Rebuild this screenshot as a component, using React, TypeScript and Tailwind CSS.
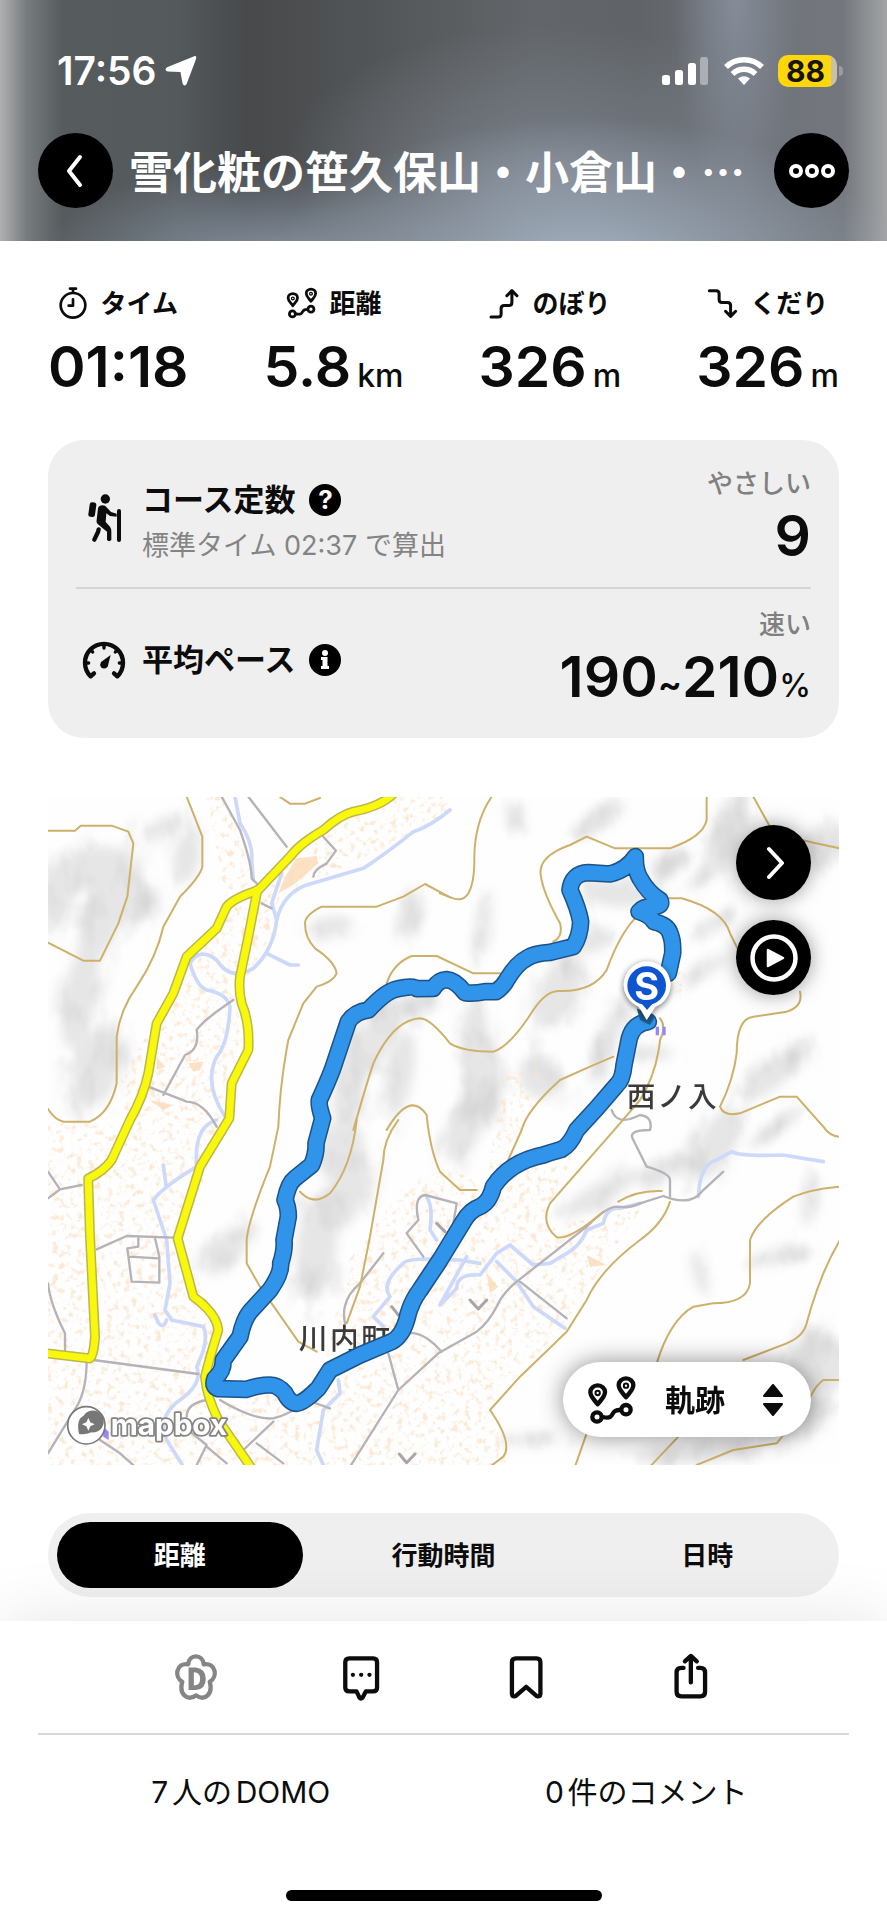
import { useState } from "react";
import type { ReactNode } from "react";

const ROUTE =
  "M1825 695Q1780 700 1768 745L1752 825Q1748 870 1730 885L1670 955L1610 1020Q1590 1065 1565 1078Q1540 1085 1510 1095Q1410 1115 1360 1190Q1350 1235 1320 1250Q1290 1260 1270 1295L1200 1410L1140 1500Q1110 1540 1100 1590Q1085 1640 1055 1655L960 1695L870 1740L835 1795Q790 1840 770 1840Q750 1840 735 1810Q715 1785 690 1785Q655 1785 620 1798L535 1796Q515 1790 525 1765Q550 1745 550 1710L600 1640Q610 1590 630 1565L690 1500Q725 1450 722 1420Q735 1380 732 1350L745 1280Q745 1250 735 1230Q745 1180 765 1165L815 1125Q830 1090 828 1060L848 985Q835 945 838 930Q870 860 880 830L925 695Q945 665 985 660Q1040 600 1075 596Q1120 585 1130 596L1180 595Q1195 570 1220 569Q1245 570 1275 608Q1300 612 1335 605L1368 605Q1390 590 1400 570Q1430 520 1460 505Q1480 490 1530 487L1600 470Q1620 440 1622 395Q1615 355 1590 300Q1595 250 1645 248L1710 252Q1760 240 1786 200Q1785 240 1800 265Q1825 310 1860 330Q1870 350 1835 350Q1810 350 1797 365Q1830 375 1842 395Q1880 405 1888 425Q1900 450 1898 490L1885 550";

const CONTOURS = [
  "M24 122H105L122 107H215L265 125L280 160L262 320L235 400L180 512H130L24 458",
  "M24 957Q45 990 70 995H150Q210 970 230 880V740Q240 660 290 590Q350 500 370 410L420 320Q480 260 487 230V140L440 20",
  "M720 21L750 41H795L840 24",
  "M1230 322L1155 282L1090 320L1010 350H845Q795 375 795 400Q795 445 825 475Q885 515 890 550Q880 575 830 590L790 640L745 750Q720 880 715 1010L690 1130Q625 1290 620 1350V1420L660 1490L775 1655L830 1685",
  "M1040 580Q1060 520 1115 498H1190L1300 550H1380",
  "M940 1020Q980 880 1000 820Q1060 690 1140 685Q1170 685 1230 760Q1270 785 1360 785Q1410 770 1480 660Q1520 600 1560 603Q1660 605 1700 540Q1740 430 1790 380",
  "M1040 1020Q1110 900 1160 975Q1170 1080 1200 1145L1260 1200H1310",
  "M950 990Q935 1130 870 1210Q820 1250 780 1205",
  "M1075 990Q1030 1050 1030 1110L990 1340L960 1490L920 1600",
  "M1355 20Q1300 100 1303 220Q1300 345 1240 325L1200 310",
  "M2000 20V90Q1990 140 1890 175H1725L1640 140L1590 165Q1490 200 1503 260Q1510 310 1560 400Q1570 440 1540 455",
  "M2140 20L2190 110L2260 145L2400 175",
  "M1880 325H1925Q2050 360 2070 430L2100 490M2280 605Q2290 650 2240 665L2140 680Q2090 685 2090 790Q2080 870 2040 950Q2050 980 2100 970L2220 920H2270L2350 1010Q2370 1040 2400 1040",
  "M1860 685Q1880 710 1860 750Q1850 850 1800 930L1740 1000L1530 1240Q1500 1300 1550 1342Q1590 1350 1690 1265",
  "M1735 1235Q1790 1200 1865 1203M1890 1235Q1870 1300 1800 1350Q1680 1440 1640 1530L1580 1625L1440 1760L1350 1860Q1420 1960 1390 2000L1350 2030",
  "M1720 800L1650 830L1560 870Q1460 960 1445 1020L1400 1120",
  "M2400 1190Q2320 1195 2260 1220Q2150 1290 2130 1350V1480Q2120 1540 2020 1540L1960 1550Q1890 1590 1850 1720M1640 1930L1605 2030",
  "M2400 1350Q2340 1450 2300 1600Q2290 1640 2240 1660L2110 1710M2400 1770H2350Q2320 1790 2300 1850L2210 1960L2080 1980L1970 2025M1915 1940L1830 2030",
];

const WATER = [
  "M1230 60Q1170 110 1120 125Q1040 190 970 235Q850 270 800 285Q730 310 710 390Q700 480 640 535Q570 575 530 510Q480 470 450 520Q470 590 500 600Q560 610 570 650Q565 760 530 800Q490 880 555 980",
  "M585 21L600 100Q640 160 635 210L640 270M725 250L695 340L710 390M680 490L750 525H775",
  "M530 990Q460 1010 470 1130Q370 1190 340 1230L380 1350L390 1480L375 1560L395 1590L490 1610Q510 1650 470 1730Q490 1780 420 1830Q350 1880 380 1950L430 2030",
  "M370 1125L378 1185M345 1575Q365 1630 380 1590",
  "M1160 1220Q1180 1250 1170 1320L1190 1350M1320 1420L1260 1410Q1100 1400 1090 1420Q1020 1480 1050 1520L1000 1580L1030 1610",
  "M1280 1400L1200 1545L1250 1495Q1250 1450 1320 1455L1370 1390L1410 1365L1480 1425L1530 1420L1580 1390Q1620 1370 1640 1320L1690 1300Q1700 1250 1740 1255L1800 1240",
  "M1975 1220Q1980 1120 2030 1110L2075 1085Q2100 1100 2230 1095L2350 1115",
  "M1370 1415L1430 1475L1480 1550L1575 1615",
  "M895 1770L900 1810L850 1860L830 1980L850 2025",
];

const ROADS = [
  "M545 20L600 120Q635 220 635 265L655 285M625 20L740 170M850 140L888 182L860 220Q820 240 820 260",
  "M325 890L440 935Q490 935 530 1010M370 915L435 795Q480 780 470 720Q490 690 580 630M665 340L695 355",
  "M24 1145L60 1198L125 1185M24 1225L60 1198M170 1378L260 1338L400 1343M295 1340V1370L262 1375L275 1475L358 1478V1400L345 1345M268 1400L355 1405",
  "M24 1480Q30 1540 75 1630V1690M160 1710L475 1752M140 1710Q140 1800 110 1850L24 1990M180 1950L240 1990L285 2030",
  "M540 1830Q640 1890 700 1885Q760 1870 800 1830L870 1855M440 1880Q440 1840 500 1830M700 1895L610 1980M450 1925L500 1965L470 2025M500 1970L560 2020M650 1960L730 2020",
  "M930 2030L1075 1800L1195 1690L1310 1625Q1350 1595 1380 1530Q1400 1500 1430 1475L1640 1310Q1700 1250 1730 1250Q1770 1255 1800 1240L1870 1218Q1950 1250 1985 1205L2050 1145",
  "M1075 1800L1045 1690M1205 1685Q1150 1625 1110 1630M1030 1390L960 1480Q900 1530 915 1600M1150 1400L1100 1330L1135 1290Q1120 1220 1155 1215L1250 1240L1240 1300",
  "M1440 1475L1580 1585M1715 960Q1730 1010 1800 975Q1840 980 1830 1020Q1760 1020 1780 1050L1820 1130Q1890 1150 1890 1170V1220",
];

const YELLOW = [
  "M1060 12Q1020 50 940 65Q900 75 850 120Q780 160 750 200L655 300Q580 325 560 350L530 415L440 500L400 610L350 700L325 850Q310 920 270 990L215 1110Q190 1145 145 1165V1180L150 1340L165 1640Q160 1710 145 1705L20 1690",
  "M652 300L625 440L600 560Q595 600 605 640Q630 700 625 780L575 880L568 985L480 1130L413 1345L460 1520Q530 1570 535 1620Q510 1700 495 1760Q500 1820 535 1890L635 2035",
];

const HILLS: [number, number, number, number, number][] = [
  [130, 240, 130, 60, -20], [200, 350, 60, 190, 20], [120, 620, 50, 160, 10], [440, 200, 40, 80, 10],
  [170, 830, 70, 120, 15], [280, 330, 60, 70, 0], [370, 110, 70, 25, -25], [50, 330, 50, 80, 20],
  [870, 410, 70, 30, -10], [1110, 380, 30, 70, 10], [1010, 740, 50, 130, 25], [1100, 650, 90, 30, -20],
  [930, 870, 45, 150, 10], [1080, 850, 40, 130, 10], [900, 1080, 70, 90, 20], [830, 1370, 60, 160, 5],
  [560, 1380, 90, 45, -50], [920, 1200, 60, 130, 20], [1330, 410, 20, 90, 10], [1420, 80, 20, 50, -15],
  [1680, 90, 90, 25, -35], [1730, 310, 110, 40, 5], [1560, 600, 60, 120, 25], [1330, 880, 50, 140, 0],
  [1300, 740, 40, 110, 5], [1500, 860, 60, 70, -30], [1270, 1020, 50, 100, 20], [1660, 450, 60, 35, -20],
  [1890, 220, 70, 28, -25], [1990, 260, 60, 20, -35], [2060, 130, 50, 130, 20], [1990, 540, 80, 20, -30],
  [2020, 400, 70, 20, -30], [2200, 850, 120, 40, -38], [2030, 1060, 55, 120, 30], [2200, 1020, 90, 20, -35],
  [1680, 1210, 130, 32, -30], [1870, 1140, 90, 30, -20], [2310, 1230, 20, 80, 10], [2220, 1400, 80, 22, -10],
  [1980, 1450, 20, 70, -15], [2340, 1720, 90, 90, 0], [1980, 1990, 190, 30, -5], [2260, 1890, 120, 50, -20],
  [1700, 760, 30, 130, 20], [1470, 1950, 90, 15, 0], [1840, 790, 60, 20, 0], [2360, 160, 60, 60, 20],
];

const TOWNS = [
  "M500 20L560 20L640 280L560 320L520 420L350 690L240 860L260 1000L24 1000V2030H630L500 1800L530 1600L420 1340L570 980L620 760L600 560L650 300L850 120L1060 20H1230V80L850 260L720 310L690 490L620 560V330L560 340Z",
  "M520 1840L880 1780L1100 1640L1200 1430L1380 1170L1640 1020L1500 1300L1640 1290L1800 1260L1640 1500L1560 1620L1350 1850L1400 2025H640Z",
  "M860 1700L920 1420L1100 1180L1230 1130L1330 1190L1060 1640Z",
  "M1880 520L1950 560L1920 620L1860 600ZM1400 850L1500 830L1420 1100L1340 1150Z",
];

function TerrainMap() {
  return (
    <svg viewBox="24 21 2373 2004" className="block h-auto w-full" role="img" aria-label="Map of the hiking course">
      <defs>
        <filter id="soft" x="-50%" y="-50%" width="200%" height="200%">
          <feGaussianBlur stdDeviation="16" />
        </filter>
        <filter id="relief" x="0" y="0" width="100%" height="100%">
          <feTurbulence type="fractalNoise" baseFrequency="0.012 0.007" numOctaves="3" seed="8" />
          <feColorMatrix values="0 0 0 0 .5  0 0 0 0 .5  0 0 0 0 .5  1.8 0 0 0 -.8" />
        </filter>
        <filter id="speckle" x="0" y="0" width="100%" height="100%">
          <feTurbulence type="fractalNoise" baseFrequency="0.055" numOctaves="3" seed="4" />
          <feColorMatrix values="0 0 0 0 .97  0 0 0 0 .76  0 0 0 0 .56  4.5 0 0 0 -2.4" />
        </filter>
        <filter id="markerShadow" x="-60%" y="-60%" width="220%" height="220%">
          <feDropShadow dx="0" dy="5" stdDeviation="10" floodOpacity=".6" />
        </filter>
        <clipPath id="townClip">
          {TOWNS.map((d) => <path key={d} d={d} />)}
        </clipPath>
        <mask id="hillMask">
          <g fill="white" filter="url(#soft)">
            {HILLS.map(([x, y, rx, ry, a]) => (
              <ellipse key={`${x}-${y}`} cx={x} cy={y} rx={rx * 1.5} ry={ry * 1.5} transform={`rotate(${a} ${x} ${y})`} />
            ))}
          </g>
        </mask>
      </defs>
      <rect x="24" y="21" width="2373" height="2004" fill="#fefefe" />
      <g fill="#77787a" opacity=".18" filter="url(#soft)">
        {HILLS.map(([x, y, rx, ry, a]) => (
          <ellipse key={`${x}-${y}`} cx={x} cy={y} rx={rx} ry={ry} transform={`rotate(${a} ${x} ${y})`} />
        ))}
      </g>
      <g mask="url(#hillMask)">
        <rect x="24" y="21" width="2373" height="2004" filter="url(#relief)" opacity=".5" />
      </g>
      <g clipPath="url(#townClip)">
        <rect x="24" y="21" width="2373" height="2004" filter="url(#speckle)" opacity=".75" />
      </g>
      <g fill="#fbdcbb" opacity=".85">
        <path d="M770 205L830 198L835 220L760 285L715 310L735 260Z" />
        <path d="M445 820L490 815L480 840L460 845ZM350 800L375 830L350 840ZM330 930L400 945L370 960ZM1640 1395L1700 1425L1650 1430ZM1340 1450L1375 1490L1350 1510Z" />
      </g>
      <g fill="none" strokeLinecap="round" strokeLinejoin="round">
        <g stroke="#cdd9fa" strokeWidth="11">{WATER.map((d) => <path key={d} d={d} />)}</g>
        <g stroke="#b5b2b8" strokeWidth="7">{ROADS.map((d) => <path key={d} d={d} />)}</g>
        <g stroke="#cdb06a" strokeWidth="6">{CONTOURS.map((d) => <path key={d} d={d} />)}</g>
        <g stroke="#bdb64e" strokeWidth="30">{YELLOW.map((d) => <path key={d} d={d} />)}</g>
        <g stroke="#f8f80c" strokeWidth="21">{YELLOW.map((d) => <path key={d} d={d} />)}</g>
        <path d="M1290 1530L1315 1557L1340 1530M1078 1992L1100 2018L1125 1992M1190 1300L1215 1325M1055 1550L1075 1575" stroke="#aaa4a8" strokeWidth="9" />
      </g>
      <path d="M1847 710H1857V736H1847ZM1867 710H1877V736H1867ZM190 1910L206 1925V1950L190 1940Z" fill="#9a86f4" />
      <g fill="#3a3a3a" className="font-['Noto_Sans_CJK_JP',sans-serif] font-medium" fontSize="86">
        <text x="1760" y="950">西<tspan dx="6">ノ</tspan><tspan dx="6">入</tspan></text>
        <text x="776" y="1676">川<tspan dx="8">内</tspan><tspan dx="8">町</tspan></text>
      </g>
      <g fill="none" strokeLinecap="round" strokeLinejoin="round">
        <path d={ROUTE} stroke="#1c5288" strokeWidth="53" />
        <path d={ROUTE} stroke="#2f94ea" strokeWidth="44" />
      </g>
      <g>
        <path d="M1790 655Q1825 670 1845 680L1830 705L1800 690Z" fill="#1f5f96" />
        <path d="M1820 690L1797 650A70 70 0 1 1 1846 650Z" fill="#fff" filter="url(#markerShadow)" />
        <circle cx="1820" cy="587" r="58" fill="#0d55d0" />
        <path d="M1803 638H1840L1821 660Z" fill="#0d55d0" />
        <text x="1820" y="629" textAnchor="middle" fill="#fff" fontSize="114" className="font-['Inter',sans-serif] font-bold">S</text>
      </g>
      <g>
        <circle cx="139" cy="1906" r="56" fill="#fff" stroke="#777" strokeWidth="5" />
        <path d="M117 1932Q108 1888 130 1878A33 33 0 1 1 155 1927Q135 1935 117 1932Z" fill="#777" />
        <path d="M145 1884L151 1897L164 1903L151 1909L145 1922L139 1909L126 1903L139 1897Z" fill="#fff" />
        <text x="212" y="1935" fontSize="89" fill="#fff" stroke="#858585" strokeWidth="11" strokeLinejoin="round" paintOrder="stroke" className="font-['Inter',sans-serif] font-bold">mapbox</text>
      </g>
    </svg>
  );
}

function CourseIcon({ className }: { className: string }) {
  return (
    <svg viewBox="436 761 150 150" className={className} fill="none" stroke="currentColor" strokeWidth="13" strokeLinecap="round" strokeLinejoin="round" aria-hidden="true">
      <path d="M468 849C457 834 446 826 446 812A22 20 0 0 1 490 812C490 826 479 834 468 849Z" />
      <path d="M553 828C542 813 531 805 531 791A22 20 0 0 1 575 791C575 805 564 813 553 828Z" />
      <circle cx="468" cy="815" r="3" />
      <circle cx="553" cy="793" r="3" />
      <circle cx="466" cy="887" r="14" />
      <circle cx="553" cy="865" r="14" />
      <path d="M484 887C525 896 500 865 536 866" />
    </svg>
  );
}

function StopwatchIcon() {
  return (
    <svg viewBox="55 46 90 102" className="h-[34px] w-[30px]" fill="none" stroke="currentColor" strokeWidth="8" strokeLinecap="round" strokeLinejoin="round" aria-hidden="true">
      <circle cx="100" cy="104" r="37" />
      <path d="M91 54H109M100 56V66M100 86V105H87" />
    </svg>
  );
}

function ClimbIcon() {
  return (
    <svg viewBox="42 50 92 92" className="size-[31px]" fill="none" stroke="currentColor" strokeWidth="9" strokeLinecap="round" strokeLinejoin="round" aria-hidden="true">
      <path d="M48 136H69Q78 136 78 127V111Q78 102 87 102H101Q110 102 110 93V62M95 73L110 58L125 73" />
    </svg>
  );
}

function DescendIcon() {
  return (
    <svg viewBox="696 52 92 92" className="size-[31px]" fill="none" stroke="currentColor" strokeWidth="9" strokeLinecap="round" strokeLinejoin="round" aria-hidden="true">
      <path d="M703 60H723Q732 60 732 69V86Q732 95 741 95H757Q766 95 766 104V134M751 121L766 136L781 121" />
    </svg>
  );
}

function HikerIcon() {
  return (
    <svg viewBox="36 70 132 150" className="h-[50px] w-11" fill="none" stroke="currentColor" strokeLinecap="round" strokeLinejoin="round" aria-hidden="true">
      <circle cx="106" cy="88" r="14" fill="currentColor" stroke="none" />
      <rect x="57" y="98" width="20" height="44" rx="7" transform="rotate(8 67 120)" fill="currentColor" stroke="none" />
      <path d="M84 116Q86 107 98 107Q106 107 111 114L123 127L140 132V141L120 139L109 131L107 157L120 171Q124 176 124 184V211Q117 218 111 211V186L84 164Q78 159 80 151Z" fill="currentColor" stroke="none" />
      <path d="M86 179L84 187L73 210" strokeWidth="13" />
      <path d="M147 124V211" strokeWidth="12" />
    </svg>
  );
}

function GaugeIcon() {
  return (
    <svg viewBox="36 502 132 120" className="h-10 w-11" fill="none" stroke="currentColor" strokeWidth="13" strokeLinecap="round" strokeLinejoin="round" aria-hidden="true">
      <path d="M72 602L62 611A57 57 0 1 1 142 611L132 602" />
      <path d="M102 516V526M62 531L68 538M142 531L136 538M46 571H56M158 571H148" strokeWidth="10" />
      <path d="M93 568L122 547L113 582Q103 592 93 584Q88 576 93 568Z" fill="currentColor" stroke="none" />
    </svg>
  );
}

function StatusBar() {
  return (
    <div className="flex items-center justify-between pr-11 pl-[57px] text-white">
      <div className="flex items-center gap-2">
        <span className="text-[39px] leading-10 font-semibold">17:56</span>
        <svg viewBox="0 0 32 32" className="size-8" fill="currentColor" stroke="currentColor" strokeWidth="2" strokeLinejoin="round" aria-hidden="true">
          <path d="M29 2.500Q31 1 30 4L21 28Q19.500 31 18.500 28L16.500 17Q16.500 16 15 16L3 15.500Q0 14.500 3 13Z" />
        </svg>
      </div>
      <div className="flex items-center gap-3.5">
        <svg viewBox="0 0 48 32" className="h-8 w-12" fill="currentColor" aria-hidden="true">
          <rect x="0" y="20" width="8" height="10" rx="2.500" />
          <rect x="13" y="15" width="8" height="15" rx="2.500" />
          <rect x="26" y="8" width="8" height="22" rx="2.500" />
          <rect x="38" y="2" width="8" height="28" rx="2.500" opacity=".4" />
        </svg>
        <svg viewBox="0 0 40 30" className="h-[30px] w-10" fill="none" stroke="currentColor" strokeWidth="5.500" aria-hidden="true">
          <path d="M2 11A26 26 0 0 1 38 11M8.500 18A16.500 16.500 0 0 1 31.500 18" />
          <path d="M20 29L14 22.500Q20 18 26 22.500Z" fill="currentColor" stroke="none" />
        </svg>
        <div className="flex items-center gap-0.5">
          <span className="flex h-8 w-[59px] items-center justify-center rounded-[10px] bg-linear-to-r from-[#fdd70c] from-90% to-[#c7c1a6] to-90% pr-1 text-[30px] leading-8 font-bold text-[#181400]">88</span>
          <span className="h-2.5 w-1 rounded-r-full bg-[#999da1]" />
        </div>
      </div>
    </div>
  );
}

function Stat({ icon, label, value, unit }: { icon: ReactNode; label: string; value: string; unit?: string }) {
  return (
    <div className="flex flex-col items-center gap-4 whitespace-nowrap">
      <dt className="flex h-10 items-center gap-3 text-[26px] font-bold">
        {icon}
        {label}
      </dt>
      <dd className="flex h-14 items-baseline gap-1.5 text-[57px] leading-14 font-semibold">
        {value}
        {unit && <span className="text-[32px] font-medium">{unit}</span>}
      </dd>
    </div>
  );
}

const TABS = ["距離", "行動時間", "日時"];

export default function App() {
  const [tab, setTab] = useState("距離");
  const roundButton = "flex size-[75px] shrink-0 items-center justify-center rounded-full bg-black text-white";

  return (
    <div lang="ja" className="min-h-screen bg-white font-['Inter','Noto_Sans_CJK_JP',sans-serif] text-[#0c0c0c]">
      <header className="flex flex-col gap-[42px] bg-[radial-gradient(ellipse_36%_65%_at_66%_114%,#a9b7c8_0%,transparent_100%),radial-gradient(ellipse_26%_45%_at_30%_112%,#8d99a8_0%,transparent_100%),radial-gradient(ellipse_7%_90%_at_83%_0%,#858c98_0%,transparent_100%),radial-gradient(ellipse_30%_60%_at_62%_70%,#787e87_0%,transparent_100%),linear-gradient(to_right,#b0b0b0_0%,#777c7e_3%,#565b5e_7%,#54595c_20%,#47494b_28%,#55585a_45%,#62666a_60%,#606468_72%,#6e7279_84%,#73777d_95%,#a2a4a6_100%)] pt-[51px] pb-[33px]">
        <StatusBar />
        <div className="flex items-center gap-4 px-[38px]">
          <button aria-label="戻る" className={roundButton}>
            <svg viewBox="0 0 20 34" className="h-[34px] w-5" fill="none" stroke="currentColor" strokeWidth="4" strokeLinecap="round" strokeLinejoin="round">
              <path d="M14 3L3 17L14 31" />
            </svg>
          </button>
          <h1 className="min-w-0 flex-1 font-['Noto_Sans_CJK_JP',sans-serif] text-[44px] leading-[75px] font-bold whitespace-nowrap text-white">雪化粧の笹久保山・小倉山・…</h1>
          <button aria-label="メニュー" className={roundButton}>
            <svg viewBox="0 0 48 16" className="h-4 w-12" fill="none" stroke="currentColor" strokeWidth="4">
              <circle cx="8" cy="8" r="5" />
              <circle cx="24" cy="8" r="5" />
              <circle cx="40" cy="8" r="5" />
            </svg>
          </button>
        </div>
      </header>

      <main className="flex flex-col px-12 pt-[42px] pb-6">
        <dl className="flex justify-between">
          <Stat icon={<StopwatchIcon />} label="タイム" value="01:18" />
          <Stat icon={<CourseIcon className="size-8" />} label="距離" value="5.8" unit="km" />
          <Stat icon={<ClimbIcon />} label="のぼり" value="326" unit="m" />
          <Stat icon={<DescendIcon />} label="くだり" value="326" unit="m" />
        </dl>

        <section className="mt-[45px] rounded-[36px] bg-[#efefef] px-7">
          <div className="flex h-[149px] items-center justify-between border-b-2 border-[#d5d5d5]">
            <div className="flex items-center gap-4 pt-2 pl-1.5">
              <HikerIcon />
              <div className="flex flex-col gap-1 pt-2">
                <div className="flex h-11 items-center gap-3.5">
                  <h2 className="text-[31px] leading-11 font-bold">コース定数</h2>
                  <button aria-label="コース定数について" className="flex size-8 items-center justify-center rounded-full bg-black text-[26px] leading-8 font-bold text-white">?</button>
                </div>
                <p className="text-[27px] leading-10 text-[#848484]">標準タイム 02:37 で算出</p>
              </div>
            </div>
            <div className="flex flex-col items-end gap-1">
              <span className="text-[26px] leading-10 font-medium text-[#808080]">やさしい</span>
              <span className="text-[57px] leading-14 font-semibold">9</span>
            </div>
          </div>
          <div className="flex h-[149px] items-center justify-between">
            <div className="flex items-center gap-4 pb-2 pl-1.5">
              <GaugeIcon />
              <div className="flex h-11 items-center gap-3.5">
                <h2 className="text-[31px] leading-11 font-bold">平均ペース</h2>
                <button aria-label="平均ペースについて" className="flex size-8 items-center justify-center rounded-full bg-black text-white">
                  <svg viewBox="0 0 32 32" className="size-8" fill="currentColor">
                    <circle cx="16" cy="9" r="3" />
                    <path d="M12 13H18.500V22H20V25H12V22H13.500V16H12Z" />
                  </svg>
                </button>
              </div>
            </div>
            <div className="flex flex-col items-end gap-1 pb-2">
              <span className="text-[26px] leading-10 font-medium text-[#808080]">速い</span>
              <span className="text-[57px] leading-14 font-semibold">190<span className="text-[36px]">~</span>210<span className="text-[32px] font-medium">%</span></span>
            </div>
          </div>
        </section>

        <section className="relative mt-[59px] overflow-hidden">
          <TerrainMap />
          <div className="absolute top-7 right-7 flex flex-col gap-5">
            <button aria-label="地図を開く" className={roundButton + " shadow-[0_0_20px_rgba(0,0,0,0.4)]"}>
              <svg viewBox="0 0 20 34" className="h-[34px] w-5" fill="none" stroke="currentColor" strokeWidth="4" strokeLinecap="round" strokeLinejoin="round">
                <path d="M5 3L18 17L5 31" />
              </svg>
            </button>
            <button aria-label="再生" className={roundButton + " shadow-[0_0_20px_rgba(0,0,0,0.4)]"}>
              <svg viewBox="0 0 48 48" className="size-12" fill="none" stroke="currentColor" strokeWidth="4.500">
                <circle cx="24" cy="24" r="21.500" />
                <path d="M18 16V32L33 24Z" fill="currentColor" strokeWidth="2.500" strokeLinejoin="round" />
              </svg>
            </button>
          </div>
          <label className="absolute right-7 bottom-7 flex h-[75px] w-[248px] items-center rounded-full bg-white pr-7 pl-6 shadow-[0_0_24px_rgba(0,0,0,0.45)]">
            <CourseIcon className="size-[50px]" />
            <select aria-label="表示" className="ml-7 w-[62px] appearance-none bg-transparent text-[30px] leading-11 font-bold">
              <option>軌跡</option>
            </select>
            <svg viewBox="0 0 20 32" className="ml-auto h-8 w-5" fill="currentColor" stroke="currentColor" strokeWidth="2" strokeLinejoin="round" aria-hidden="true">
              <path d="M10 1L19 12H1ZM10 31L19 20H1Z" />
            </svg>
          </label>
        </section>

        <div role="tablist" className="mt-12 grid grid-cols-3 rounded-full bg-[#efefef]">
          {TABS.map((name) => (
            <button
              key={name}
              role="tab"
              aria-selected={tab === name}
              onClick={() => setTab(name)}
              className={
                "m-[9px] h-[66px] rounded-full text-[26px] font-bold " + (tab === name ? "bg-black text-white" : "text-[#0c0c0c]")
              }
            >
              {name}
            </button>
          ))}
        </div>
      </main>

      <footer className="relative bg-white px-[38px] shadow-[0_0_64px_rgba(0,0,0,0.1)]">
        <div className="flex h-[114px] items-center justify-around border-b-2 border-[#d9d9d9] px-[76px]">
          <button aria-label="DOMOを送る" className="text-[#858585]">
            <svg viewBox="57 66 129 145" className="h-12 w-11" fill="none" stroke="currentColor" strokeWidth="13" strokeLinecap="round" strokeLinejoin="round">
              <path d="M98 100C100 68 142 68 145 100C182 94 188 138 163 153C174 192 147 212 122 194C96 212 69 192 80 153C55 138 61 94 98 100Z" />
              <path d="M99 110H121Q151 114 151 144Q151 176 121 178H99ZM115 124V164Q134 164 134 144Q134 124 115 124Z" fill="currentColor" stroke="none" fillRule="evenodd" />
            </svg>
          </button>
          <button aria-label="コメント">
            <svg viewBox="487 66 129 145" className="h-12 w-11" fill="none" stroke="currentColor" strokeWidth="13" strokeLinecap="round" strokeLinejoin="round">
              <path d="M516 82H588Q600 82 600 94V170Q600 182 588 182H566L556 201Q551 206 547 201L538 182H516Q504 182 504 170V94Q504 82 516 82Z" />
              <path d="M527 132H527.100M552 132H552.100M577 132H577.100" />
            </svg>
          </button>
          <button aria-label="保存">
            <svg viewBox="917 66 129 145" className="h-12 w-11" fill="none" stroke="currentColor" strokeWidth="13" strokeLinecap="round" strokeLinejoin="round">
              <path d="M951 82H1013Q1025 82 1025 94V190Q1024 200 1014 196L982 168L950 196Q940 200 939 190V94Q939 82 951 82Z" />
            </svg>
          </button>
          <button aria-label="共有">
            <svg viewBox="1349 66 129 145" className="h-12 w-11" fill="none" stroke="currentColor" strokeWidth="13" strokeLinecap="round" strokeLinejoin="round">
              <path d="M1391 111H1384Q1370 111 1370 125V183Q1370 197 1384 197H1442Q1456 197 1456 183V125Q1456 111 1442 111H1435M1413 155V77M1395 91L1413 75L1431 91" />
            </svg>
          </button>
        </div>
        <div className="grid h-[114px] grid-cols-2 items-center text-center text-[30px] [text-autospace:normal]">
          <a href="#domo">7人のDOMO</a>
          <a href="#comments">0件のコメント</a>
        </div>
        <div className="flex justify-center pt-[41px] pb-[19px]">
          <span className="h-[11px] w-[316px] rounded-full bg-black" />
        </div>
      </footer>
    </div>
  );
}
